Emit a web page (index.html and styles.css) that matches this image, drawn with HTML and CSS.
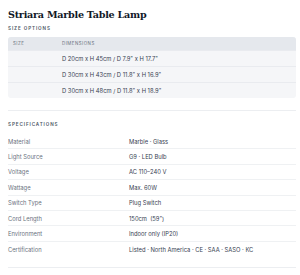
FILE: index.html
```html
<!DOCTYPE html>
<html>
<head>
<meta charset="utf-8">
<link rel="stylesheet" href="styles.css">
</head>
<body>
<div class="page">
  <h1 class="title">Striara Marble Table Lamp</h1>
  <section class="sizes">
    <h2 class="label">Size options</h2>
    <div class="table">
      <div class="row head"><span class="c1">Size</span><span class="c2">Dimensions</span></div>
      <div class="row"><span class="c1"></span><span class="c2">D 20cm x H 45cm / D 7.9" x H 17.7"</span></div>
      <div class="row"><span class="c1"></span><span class="c2">D 30cm x H 43cm / D 11.8" x H 16.9"</span></div>
      <div class="row"><span class="c1"></span><span class="c2">D 30cm x H 48cm / D 11.8" x H 18.9"</span></div>
    </div>
  </section>
  <section class="specs">
    <h2 class="label">Specifications</h2>
    <dl class="spec-list">
      <div class="spec"><dt>Material</dt><dd>Marble · Glass</dd></div>
      <div class="spec"><dt>Light Source</dt><dd>G9 · LED Bulb</dd></div>
      <div class="spec"><dt>Voltage</dt><dd>AC 110–240 V</dd></div>
      <div class="spec"><dt>Wattage</dt><dd>Max. 60W</dd></div>
      <div class="spec"><dt>Switch Type</dt><dd>Plug Switch</dd></div>
      <div class="spec"><dt>Cord Length</dt><dd>150cm &nbsp;(59")</dd></div>
      <div class="spec"><dt>Environment</dt><dd>Indoor only (IP20)</dd></div>
      <div class="spec"><dt>Certification</dt><dd>Listed · North America · CE · SAA · SASO · KC</dd></div>
    </dl>
  </section>
</div>
</body>
</html>
```

FILE: styles.css
```css
* { box-sizing: border-box; }
html, body { margin: 0; padding: 0; background: #ffffff; }
body { font-family: "Inter", "Noto Sans", sans-serif; color: #374151; }
.page { padding: 8px 4px 0 8px; }
.title {
  margin: 0;
  font-family: "DejaVu Serif", "Liberation Serif", serif;
  font-weight: bold;
  font-size: 9.6px;
  line-height: 14px;
  color: #111827;
  letter-spacing: -0.25px;
}
.label {
  margin: 0;
  font-size: 4.6px;
  font-weight: 600;
  letter-spacing: 0.9px;
  text-transform: uppercase;
  color: #4b5563;
  line-height: 8px;
}
.sizes { margin-top: 3px; }
.sizes .label { margin-bottom: 4px; }
.table {
  background: #f5f6f8;
  border-radius: 3px;
  overflow: hidden;
}
.row {
  display: flex;
  align-items: center;
  height: 16px;
  font-size: 5.8px;
  color: #374151;
  border-top: 1px solid #e9ebef;
}
.row.head {
  height: 13px;
  background: #e5e8ed;
  border-top: none;
  font-size: 4.4px;
  letter-spacing: 0.5px;
  text-transform: uppercase;
  color: #6b7280;
}
.c1 { width: 54px; padding-left: 5px; }
.c2 { flex: 1; }
.specs {
  margin-top: 12px;
  border-top: 1px solid #eceef1;
  border-bottom: 1px solid #eceef1;
  padding-top: 10px;
  padding-bottom: 10px;
}
.specs .label { margin-bottom: 5px; }
.spec-list { margin: 0; }
.spec {
  display: flex;
  align-items: center;
  height: 15.4px;
  font-size: 5.8px;
  border-bottom: 1px solid #eff1f3;
}
.spec:last-child { border-bottom: none; }
.spec dt { width: 121px; color: #6b7280; }
.spec dd { margin: 0; color: #374151; }
```
